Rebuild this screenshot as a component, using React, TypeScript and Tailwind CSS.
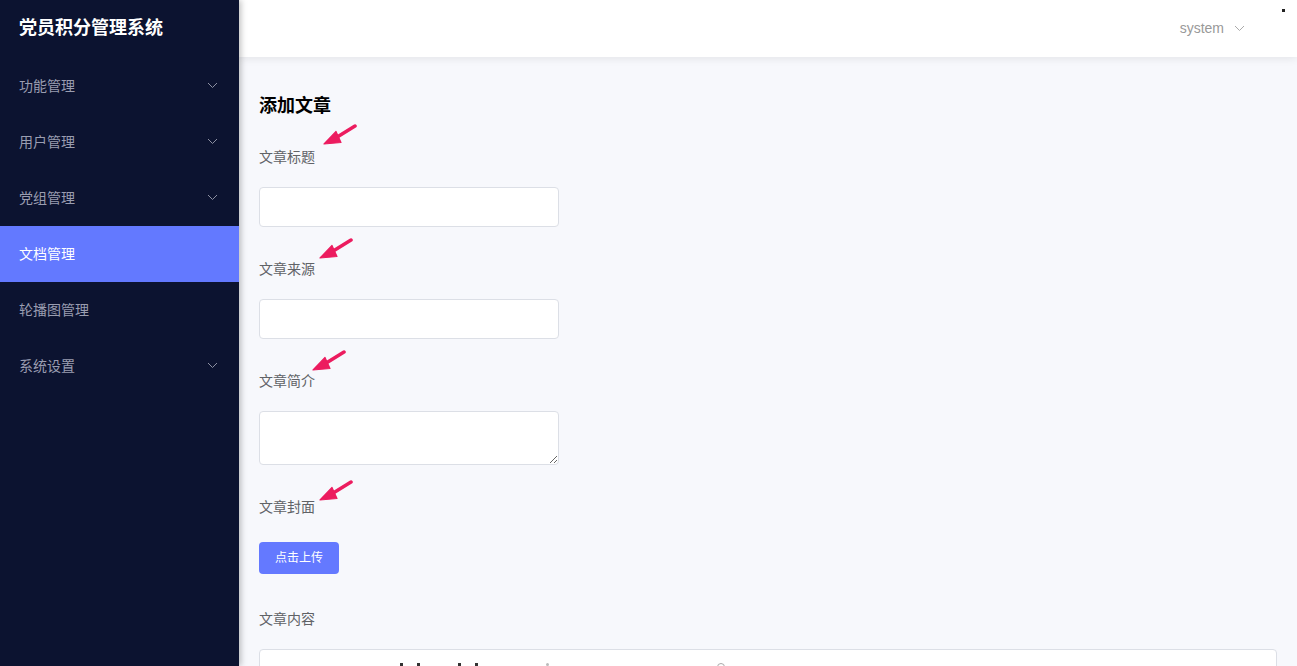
import React from "react";

const font = { fontFamily: '"Noto Sans", "Noto Sans CJK SC", sans-serif' };

function Chevron({ className = "" }: { className?: string }) {
  return (
    <svg width="11" height="7" viewBox="0 0 11 7" className={className} fill="none">
      <path d="M1 1l4.5 4.5L10 1" stroke="currentColor" strokeWidth="1" />
    </svg>
  );
}

function Arrow({ className = "" }: { className?: string }) {
  return (
    <svg width="36" height="24" viewBox="0 0 36 24" className={className} fill="none">
      <path d="M33 2 L12 15" stroke="#ec1c5f" strokeWidth="3.5" strokeLinecap="round" />
      <path d="M2 20 L14 7.5 L19 18.5 Z" fill="#ec1c5f" strokeLinejoin="round" stroke="#ec1c5f" strokeWidth="1.2" />
    </svg>
  );
}

const menu = [
  { label: "功能管理", chevron: true },
  { label: "用户管理", chevron: true },
  { label: "党组管理", chevron: true },
  { label: "文档管理", chevron: false, active: true },
  { label: "轮播图管理", chevron: false },
  { label: "系统设置", chevron: true },
];

function Field({ label, children, arrow }: { label: string; children: React.ReactNode; arrow: string }) {
  return (
    <div className="mb-8">
      <div className="relative h-5 text-[14px] leading-5 text-[#606266] mb-5">
        {label}
        <Arrow className={`absolute ${arrow}`} />
      </div>
      {children}
    </div>
  );
}

export default function App() {
  return (
    <div className="flex h-[666px] w-full overflow-hidden bg-[#f7f8fc]" style={font}>
      <aside className="w-[239px] shrink-0 bg-[#0c1330] relative z-10 shadow-[2px_0_6px_rgba(0,0,0,0.25)]">
        <div className="h-[58px] pl-[19px] pt-[14px] text-[18px] font-bold text-white leading-[26px]">党员积分管理系统</div>
        <nav>
          {menu.map((m) => (
            <div
              key={m.label}
              className={`h-14 flex items-center justify-between pl-[19px] pr-[21px] text-[14px] pb-[2px] ${
                m.active ? "bg-[#6379ff] text-white" : "text-[#9a9db0]"
              }`}
            >
              <span>{m.label}</span>
              {m.chevron && <Chevron className="text-[#8d90a2]" />}
            </div>
          ))}
        </nav>
      </aside>
      <div className="flex-1 flex flex-col min-w-0">
        <header className="h-[57px] shrink-0 bg-white shadow-[0_2px_8px_rgba(0,0,0,0.08)] relative flex items-center justify-end pr-[52px]">
          <span className="text-[14px] text-[#999] mr-[10px]" style={{ fontFamily: '"Liberation Sans", Arial, sans-serif' }}>system</span>
          <Chevron className="text-[#aaa]" />
          <div className="absolute right-[12px] top-[9px] w-[3px] h-[3px] bg-[#222]" />
        </header>
        <main className="flex-1 px-5 pt-[36px]">
          <h1 className="text-[18px] font-bold text-black leading-6 mb-[30px]">添加文章</h1>
          <Field label="文章标题" arrow="left-[63px] -top-[23px]">
            <input className="block w-[300px] h-10 bg-white border border-[#dcdfe6] rounded" />
          </Field>
          <Field label="文章来源" arrow="left-[59px] -top-[21px]">
            <input className="block w-[300px] h-10 bg-white border border-[#dcdfe6] rounded" />
          </Field>
          <Field label="文章简介" arrow="left-[52px] -top-[21px]">
            <textarea className="block w-[300px] h-[54px] bg-white border border-[#dcdfe6] rounded resize-y" />
          </Field>
          <div className="relative h-5 text-[14px] leading-5 text-[#606266]">
            文章封面
            <Arrow className="absolute left-[59px] -top-[17px]" />
          </div>
          <button className="mt-[25px] w-20 h-8 rounded bg-[#6479ff] text-white text-[12px]">点击上传</button>
          <div className="mt-[35px] h-5 text-[14px] leading-5 text-[#606266]">文章内容</div>
          <div className="mt-5 h-[200px] bg-white border border-[#dcdfe6] rounded-[4px] flex items-start pt-[13px] pl-[140px] gap-[14px]">
            <div className="w-[3px] h-[10px] bg-[#333]" />
            <div className="w-[3px] h-[10px] bg-[#333]" />
            <div className="w-[10px] h-[10px]" />
            <div className="w-[3px] h-[10px] bg-[#333]" />
            <div className="w-[3px] h-[10px] bg-[#333]" />
            <div className="w-[40px]" />
            <div className="w-[3px] h-[3px] bg-[#bbb] rounded-full" />
            <div className="w-[140px]" />
            <div className="w-[8px] h-[8px] border border-[#aaa] rounded-full" />
            <div className="w-[14px] h-[2px] mt-1 bg-[#ccc]" />
          </div>
        </main>
      </div>
    </div>
  );
}
